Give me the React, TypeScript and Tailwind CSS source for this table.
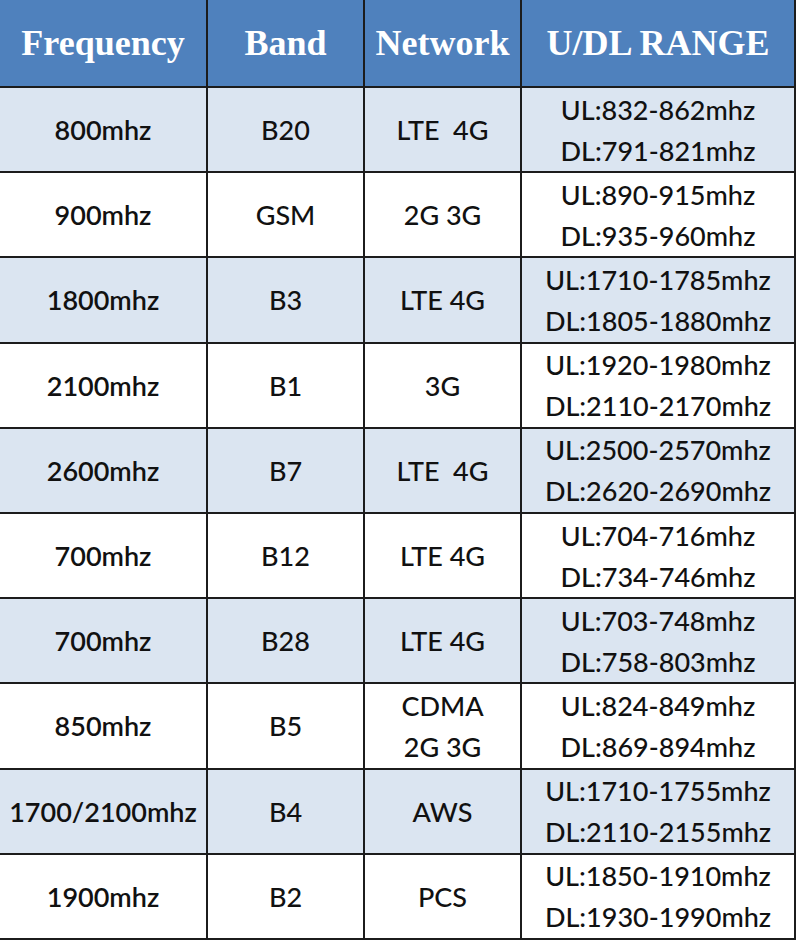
const rows: { freq: string; band: string; net: string[]; ul: string; dl: string }[] = [
  { freq: "800mhz", band: "B20", net: ["LTE\u00a0 4G"], ul: "UL:832-862mhz", dl: "DL:791-821mhz" },
  { freq: "900mhz", band: "GSM", net: ["2G 3G"], ul: "UL:890-915mhz", dl: "DL:935-960mhz" },
  { freq: "1800mhz", band: "B3", net: ["LTE 4G"], ul: "UL:1710-1785mhz", dl: "DL:1805-1880mhz" },
  { freq: "2100mhz", band: "B1", net: ["3G"], ul: "UL:1920-1980mhz", dl: "DL:2110-2170mhz" },
  { freq: "2600mhz", band: "B7", net: ["LTE\u00a0 4G"], ul: "UL:2500-2570mhz", dl: "DL:2620-2690mhz" },
  { freq: "700mhz", band: "B12", net: ["LTE 4G"], ul: "UL:704-716mhz", dl: "DL:734-746mhz" },
  { freq: "700mhz", band: "B28", net: ["LTE 4G"], ul: "UL:703-748mhz", dl: "DL:758-803mhz" },
  { freq: "850mhz", band: "B5", net: ["CDMA", "2G 3G"], ul: "UL:824-849mhz", dl: "DL:869-894mhz" },
  { freq: "1700/2100mhz", band: "B4", net: ["AWS"], ul: "UL:1710-1755mhz", dl: "DL:2110-2155mhz" },
  { freq: "1900mhz", band: "B2", net: ["PCS"], ul: "UL:1850-1910mhz", dl: "DL:1930-1990mhz" },
];

// header cells: serif bold on the blue band
const head = "flex items-center justify-center border-b-2 border-r-2 border-[#1c1c1c] bg-[#4f81bd] text-white font-bold text-[36px] font-['Liberation_Serif',serif]";
const cell = "flex flex-col items-center justify-center overflow-hidden border-b-2 border-r-2 border-[#1c1c1c] leading-[41px]";

export default function App() {
  return (
    <div className="w-[796px] h-[941px] bg-white">
      <div className="grid h-[940px] grid-cols-[208px_157px_157px_274px] grid-rows-[88px_repeat(10,minmax(0,1fr))] text-[27px] text-[#111] font-['Lato',sans-serif] font-medium">
        <div className={head}>Frequency</div>
        <div className={head}>Band</div>
        <div className={head}>Network</div>
        <div className={head + " border-r-0"}>U/DL RANGE</div>
        {rows.map((r, i) => {
          const bg = i % 2 === 0 ? "bg-[#dbe5f1]" : "bg-white";
          return [
            <div key={i + "f"} className={`${cell} ${bg} font-semibold`}>{r.freq}</div>,
            <div key={i + "b"} className={`${cell} ${bg}`}>{r.band}</div>,
            <div key={i + "n"} className={`${cell} ${bg}`}>
              {r.net.map((n) => (
                <span key={n} className="whitespace-pre">{n}</span>
              ))}
            </div>,
            <div key={i + "r"} className={`${cell} ${bg} border-r-0`}>
              <span>{r.ul}</span>
              <span>{r.dl}</span>
            </div>,
          ];
        })}
      </div>
    </div>
  );
}
